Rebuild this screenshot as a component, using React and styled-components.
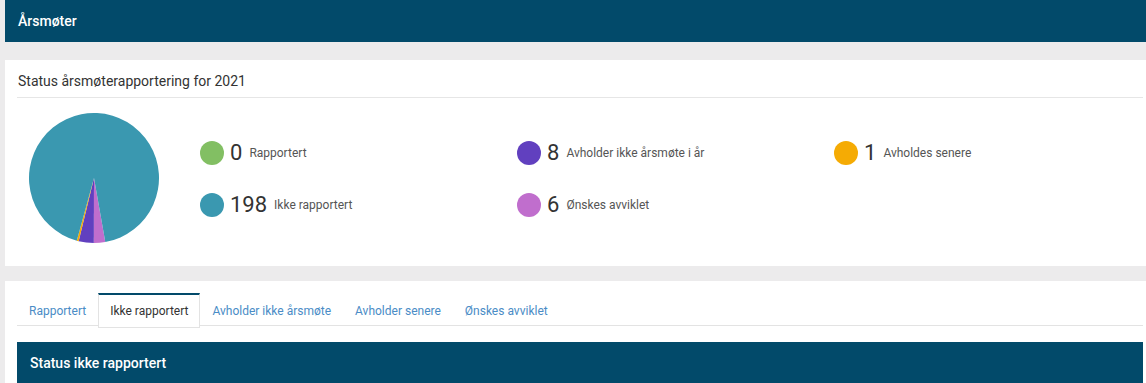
import React from 'react';
import styled, { createGlobalStyle } from 'styled-components';

const GlobalStyle = createGlobalStyle`
    body {
        margin: 0;
        background: #ecebec;
        font-family: Roboto, "Liberation Sans", sans-serif;
        color: #333;
    }
`;

const NAVY = '#024a6a';

const stats = [
    { key: 'rapportert', count: 0, label: 'Rapportert', color: '#82bf63' },
    { key: 'avholder', count: 8, label: 'Avholder ikke årsmøte i år', color: '#6140bf' },
    { key: 'senere', count: 1, label: 'Avholdes senere', color: '#f5ab04' },
    { key: 'ikke', count: 198, label: 'Ikke rapportert', color: '#3a98b0' },
    { key: 'avviklet', count: 6, label: 'Ønskes avviklet', color: '#c06ecd' },
];

// clockwise order of slices in the pie, starting a bit right of 6 o'clock
const pieOrder = ['avviklet', 'avholder', 'senere', 'ikke', 'rapportert'];

const tabs = ['Rapportert', 'Ikke rapportert', 'Avholder ikke årsmøte', 'Avholder senere', 'Ønskes avviklet'];

const Page = styled.div`
    padding-left: 5px;
`;

const Bar = styled.div`
    height: 42px;
    background: ${NAVY};
    color: #fff;
    display: flex;
    align-items: center;
    padding: 0 13px;
    font-size: 14px;
    font-weight: 500;
    margin-top: ${props => props.$offset || 0}px;
`;

const Card = styled.section`
    background: #fff;
    margin-top: ${props => props.$offset}px;
    padding: ${props => props.$top || 0}px 3px 0 12px;
`;

const CardTitle = styled.h2`
    margin: 0;
    font-size: 14px;
    font-weight: 400;
    line-height: 20px;
    padding: 11px 0 6px 1px;
    border-bottom: 1px solid #e6e6e6;
`;

const StatusBody = styled.div`
    height: 168px;
    display: flex;
    align-items: center;
`;

const PieWrap = styled.div`
    margin-left: 12px;
    width: 130px;
    height: 130px;
    margin-top: -8px;
`;

const Legend = styled.div`
    margin-left: 41px;
    margin-top: -7px;
    display: grid;
    grid-template-columns: repeat(3, 317px);
    row-gap: 28px;
`;

const Item = styled.div`
    display: flex;
    align-items: center;
    height: 24px;
`;

const Dot = styled.span`
    width: 24px;
    height: 24px;
    border-radius: 50%;
    background: ${props => props.$color};
    margin-right: 6px;
`;

const Count = styled.span`
    font-size: 22px;
    color: #333;
    margin-right: 7px;
`;

const Label = styled.span`
    font-size: 12px;
    color: #555;
`;

const Tabs = styled.div`
    display: flex;
    border-bottom: 1px solid #e3e3e3;
    height: 32px;
`;

const Tab = styled.div`
    padding: 0 11px;
    height: 31px;
    display: flex;
    align-items: center;
    font-size: 12px;
    border: 1px solid transparent;
    border-top-width: 2px;
    color: ${props => (props.$active ? '#333' : '#4a8cc6')};
    ${props => props.$active && `
        border-color: #e3e3e3;
        border-top-color: ${NAVY};
        background: #fff;
        height: 32px;
        margin-bottom: -1px;
    `}
`;

function Pie() {
    const total = stats.reduce((s, x) => s + x.count, 0);
    const r = 65;
    let angle = 80;
    const slices = pieOrder.map(key => {
        const s = stats.find(x => x.key === key);
        const sweep = (s.count / total) * 360;
        const a1 = (angle * Math.PI) / 180;
        const a2 = ((angle + sweep) * Math.PI) / 180;
        angle += sweep;
        if (!s.count) return null;
        const x1 = r + r * Math.cos(a1);
        const y1 = r + r * Math.sin(a1);
        const x2 = r + r * Math.cos(a2);
        const y2 = r + r * Math.sin(a2);
        const large = sweep > 180 ? 1 : 0;
        return (
            <path
                key={key}
                d={`M${r} ${r} L${x1} ${y1} A${r} ${r} 0 ${large} 1 ${x2} ${y2} Z`}
                fill={s.color}
            />
        );
    });
    return (
        <svg width="130" height="130" viewBox="0 0 130 130">
            {slices}
        </svg>
    );
}

function StatusCard() {
    return (
        <Card $offset={18}>
            <CardTitle>Status årsmøterapportering for 2021</CardTitle>
            <StatusBody>
                <PieWrap>
                    <Pie />
                </PieWrap>
                <Legend>
                    {stats.map(s => (
                        <Item key={s.key}>
                            <Dot $color={s.color} />
                            <Count>{s.count}</Count>
                            <Label>{s.label}</Label>
                        </Item>
                    ))}
                </Legend>
            </StatusBody>
        </Card>
    );
}

function ReportCard() {
    return (
        <Card $offset={15} $top={12}>
            <Tabs>
                {tabs.map(t => (
                    <Tab key={t} $active={t === 'Ikke rapportert'}>{t}</Tab>
                ))}
            </Tabs>
            <Bar $offset={16}>Status ikke rapportert</Bar>
        </Card>
    );
}

export default function App() {
    return (
        <Page>
            <GlobalStyle />
            <Bar>Årsmøter</Bar>
            <StatusCard />
            <ReportCard />
        </Page>
    );
}
